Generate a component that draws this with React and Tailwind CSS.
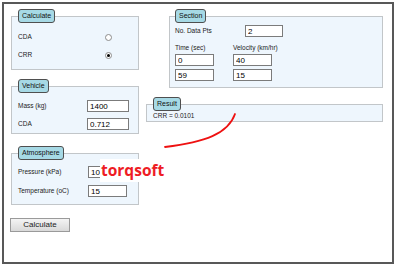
import React from 'react';

const Legend = ({ children }) => (
  <legend className="px-[3px] h-[14px] leading-[12px] text-[7px] text-[#111] bg-[#a6d9e5] border border-[#4f4f4f] rounded-[3px]">
    {children}
  </legend>
);

const Field = ({ value, w = 'w-[40px]' }) => (
  <input
    readOnly
    value={value}
    className={`block ${w} h-[12px] border border-[#7b7b7b] bg-white px-[2px] text-[8px] leading-[10px] text-black outline-none`}
  />
);

const Radio = ({ checked }) => (
  <span className="flex items-center justify-center w-[7px] h-[7px] rounded-full border border-[#8c8c8c] bg-white">
    {checked && <span className="w-[3px] h-[3px] rounded-full bg-black" />}
  </span>
);

export default function App() {
  return (
    <div className="relative w-[396px] h-[266px] bg-white p-[2px] leading-none font-['Liberation_Sans',Arial,sans-serif] text-[#1b1b1b]">
      <div className="flex h-full border-2 border-[#585858]">
        {/* left column */}
        <div className="ml-[7px] pt-[5px] w-[128px] flex flex-col">
          <fieldset className="border border-[#c2c6c9] bg-[#eef6fd] px-[6px] pt-[5px] pb-[5px]">
            <Legend>Calculate</Legend>
            <div className="flex items-center h-[18px] text-[6.5px]">
              <span className="w-[87px]">CDA</span>
              <Radio />
            </div>
            <div className="flex items-center h-[18px] text-[6.5px]">
              <span className="w-[87px]">CRR</span>
              <Radio checked />
            </div>
          </fieldset>

          <fieldset className="mt-[9px] border border-[#c2c6c9] bg-[#eef6fd] px-[6px] pt-[5px] pb-[1px]">
            <Legend>Vehicle</Legend>
            <div className="flex items-center h-[16px] text-[6.5px]">
              <span className="w-[69px]">Mass (kg)</span>
              <Field value="1400" w="w-[42px]" />
            </div>
            <div className="flex items-center h-[16px] mt-[2px] text-[6.5px]">
              <span className="w-[69px]">CDA</span>
              <Field value="0.712" w="w-[42px]" />
            </div>
          </fieldset>

          <fieldset className="mt-[12px] border border-[#c2c6c9] bg-[#eef6fd] px-[6px] pt-[4px] pb-[5px]">
            <Legend>Atmosphere</Legend>
            <div className="flex items-center h-[16px] text-[6.5px]">
              <span className="w-[70px]">Pressure (kPa)</span>
              <Field value="101.3" w="w-[39px]" />
            </div>
            <div className="flex items-center h-[16px] mt-[3px] text-[6.5px]">
              <span className="w-[70px]">Temperature (oC)</span>
              <Field value="15" w="w-[39px]" />
            </div>
          </fieldset>

          <button className="mt-[13px] -ml-[1px] w-[60px] h-[14px] border border-[#9a9a9a] bg-gradient-to-b from-[#f4f4f4] to-[#d9d9d9] text-[8px] leading-[12px] text-[#222]">
            Calculate
          </button>
        </div>

        {/* right column */}
        <div className="ml-[7px] pt-[5px] w-[237px] flex flex-col">
          <fieldset className="ml-[23px] border border-[#c2c6c9] bg-[#eef6fd] px-[5px] pt-[1px] pb-[6px]">
            <Legend>Section</Legend>
            <div className="flex items-center h-[14px] text-[6.5px]">
              <span className="w-[70px]">No. Data Pts</span>
              <Field value="2" w="w-[38px]" />
            </div>
            <div className="flex items-center h-[9px] mt-[6px] text-[6.5px]">
              <span className="w-[58px]">Time (sec)</span>
              <span>Velocity (km/hr)</span>
            </div>
            <div className="flex items-start mt-[1px]">
              <div className="w-[58px]"><Field value="0" w="w-[39px]" /></div>
              <Field value="40" w="w-[39px]" />
            </div>
            <div className="flex items-start mt-[3px]">
              <div className="w-[58px]"><Field value="59" w="w-[39px]" /></div>
              <Field value="15" w="w-[39px]" />
            </div>
          </fieldset>

          <fieldset className="mt-[9px] border border-[#c2c6c9] bg-[#eef6fd] px-[6px] pt-[1px] pb-[1px]">
            <Legend>Result</Legend>
            <div className="h-[8px] leading-[8px] text-[6.5px]">CRR = 0.0101</div>
          </fieldset>
        </div>
      </div>

      {/* annotation stroke */}
      <svg className="absolute left-0 top-0 pointer-events-none" width="396" height="266">
        <path d="M235 114 C 228 134, 205 142, 165 147" fill="none" stroke="#ee1111" strokeWidth="1.8" strokeLinecap="round" />
      </svg>

      {/* watermark */}
      <div className="absolute left-[100px] top-[159px] h-[23px] w-[66px] bg-white">
        <span className="block pl-[1px] text-[15.5px] leading-[22px] font-bold text-[#ee1c24] font-['Open_Sans',sans-serif]">
          torqsoft
        </span>
      </div>
    </div>
  );
}
